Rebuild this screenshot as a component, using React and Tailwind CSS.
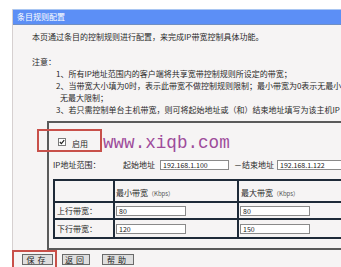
const cjk = { fontFamily: '"Noto Sans CJK SC", "Liberation Sans", sans-serif' };

function Field({ value, className }) {
  return (
    <div
      className={`h-[10px] border border-[#8a8a8a] bg-white pl-[2px] text-[7px] leading-[8px] text-[#222] ${className}`}
    >
      {value}
    </div>
  );
}

function Button({ label, w }) {
  return (
    <div
      className={`${w} h-[11px] border border-[#6a6a6a] bg-[#dedede] text-[8px] leading-[9px] text-[#222] text-center tracking-[3px]`}
    >
      {label}
    </div>
  );
}

export default function App() {
  return (
    <div
      className="relative w-[341px] h-[267px] overflow-hidden bg-white text-[#2a2a2a]"
      style={cjk}
    >
      <div className="ml-[12px] mt-[9px] w-[400px] border-l border-[#d6d0d0] bg-[#f6f4f4] h-[300px]">
        {/* title bar */}
        <div className="h-[16px] bg-[#5c8ff6] border-t border-[#a9c6f2] border-b border-b-[#6f8fc4] pl-[4px] text-[8px] leading-[14px] text-white">
          条目规则配置
        </div>

        <div className="pl-[19px] pt-[6px] text-[8px] leading-[12px] whitespace-nowrap">
          本页通过条目的控制规则进行配置，来完成IP带宽控制具体功能。
        </div>
        <div className="pl-[19px] pt-[13px] text-[8px] leading-[12px]">注意：</div>
        <div className="pl-[43px] text-[8px] leading-[12px] whitespace-nowrap">
          <div>1、所有IP地址范围内的客户端将共享宽带控制规则所设定的带宽；</div>
          <div>2、当带宽大小填为0时，表示此带宽不做控制规则限制；最小带宽为0表示无最小</div>
          <div className="pl-[4px]">无最大限制；</div>
          <div>3、若只需控制单台主机带宽，则可将起始地址或（和）结束地址填写为该主机IP</div>
        </div>

        {/* fieldset */}
        <div className="ml-[34px] mt-[5px] h-[129px] border-t-2 border-l-2 border-b-2 border-[#5a5a5a] pl-[4px]">
          <div className="flex items-center h-[37px] pt-[1px] pl-[5px]">
            <div className="w-[8px] h-[8px] border border-[#7a7a7a] bg-white flex items-center justify-center">
              <svg width="6" height="6" viewBox="0 0 6 6">
                <path d="M0.8 3 L2.4 4.6 L5.2 1.2" fill="none" stroke="#222" strokeWidth="1.2" />
              </svg>
            </div>
            <span className="ml-[6px] text-[8px] leading-[10px] mt-[3px]">启用</span>
          </div>
          <div className="flex items-center h-[10px] text-[8px] leading-[10px] whitespace-nowrap">
            <span className="w-[70px]">IP地址范围：</span>
            <span className="w-[37px]">起始地址</span>
            <Field value="192.168.1.100" className="w-[69px]" />
            <span className="ml-[5px] w-[8px]">－</span>
            <span className="w-[35px]">结束地址</span>
            <Field value="192.168.1.122" className="w-[80px]" />
          </div>

          <table className="mt-[9px] border-collapse text-[8px] leading-[10px]">
            <tbody>
              <tr className="h-[22px]">
                <td className="w-[60px] border-2 border-[#1e2a38]"></td>
                <td className="w-[124px] border-2 border-[#1e2a38] pl-[1px] pt-[5px]">
                  最小带宽<span className="text-[6px] text-[#555]">（Kbps）</span>
                </td>
                <td className="w-[124px] border-2 border-[#1e2a38] pl-[2px] pt-[5px]">
                  最大带宽<span className="text-[6px] text-[#555]">（Kbps）</span>
                </td>
              </tr>
              <tr className="h-[17px]">
                <td className="border-2 border-[#1e2a38] pl-[2px]">上行带宽：</td>
                <td className="border-2 border-[#1e2a38] pl-[1px]">
                  <Field value="80" className="w-[70px]" />
                </td>
                <td className="border-2 border-[#1e2a38] pl-[1px]">
                  <Field value="80" className="w-[70px]" />
                </td>
              </tr>
              <tr className="h-[19px]">
                <td className="border-2 border-[#1e2a38] pl-[2px]">下行带宽：</td>
                <td className="border-2 border-[#1e2a38] pl-[1px]">
                  <Field value="120" className="w-[70px]" />
                </td>
                <td className="border-2 border-[#1e2a38] pl-[1px]">
                  <Field value="150" className="w-[70px]" />
                </td>
              </tr>
            </tbody>
          </table>
        </div>

        {/* buttons */}
        <div className="flex pl-[9px] pt-[4px]">
          <Button label="保存" w="w-[31px]" />
          <div className="ml-[9px]">
            <Button label="返回" w="w-[28px]" />
          </div>
          <div className="ml-[12px]">
            <Button label="帮助" w="w-[32px]" />
          </div>
        </div>
      </div>

      {/* watermark */}
      <div
        className="absolute left-[103px] top-[133px] text-[17.6px] leading-[20px] text-[#9e4c9b]"
        style={{ fontFamily: '"Liberation Mono", monospace' }}
      >
        www.xiqb.com
      </div>

      {/* annotation boxes */}
      <div className="absolute left-[37px] top-[129px] w-[65px] h-[23px] border-2 border-[#c8504a]" />
      <div className="absolute left-[12px] top-[250px] w-[45px] h-[20px] border-2 border-[#c8504a]" />
    </div>
  );
}
